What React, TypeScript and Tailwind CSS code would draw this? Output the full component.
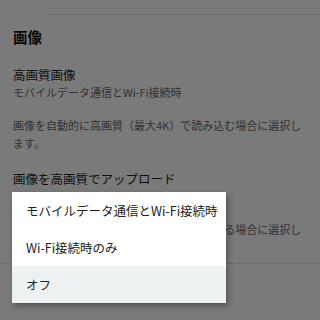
const font = { fontFamily: '"Noto Sans CJK JP", "Noto Sans", sans-serif' }

const options = ['モバイルデータ通信とWi-Fi接続時', 'Wi-Fi接続時のみ', 'オフ']

export default function App() {
  return (
    <div
      className="relative h-[320px] w-[320px] overflow-hidden bg-white text-[#1d1d1d]"
      style={font}
    >
      <div className="ml-[47px] h-[15px] border-b border-[#e4e4e4]" />

      <div className="px-[13px]">
        <h2 className="mt-[11px] text-[14.5px] font-bold leading-[22px] text-[#111]">画像</h2>

        <div className="mt-[18px] text-[12.5px] leading-[18px]">高画質画像</div>
        <div className="text-[11px] leading-[16px] text-[#6a6a6a]">
          モバイルデータ通信とWi-Fi接続時
        </div>
        <p className="mt-[16px] text-[11px] leading-[18px] text-[#6a6a6a]">
          画像を自動的に高画質（最大4K）で読み込む場合に選択します。
        </p>

        <div className="mt-[18px] text-[12.5px] leading-[18px]">画像を高画質でアップロード</div>
        <div className="mt-[2px] text-[11px] leading-[16px] text-[#6a6a6a]">
          モバイルデータ通信とWi-Fi接続時
        </div>
        <p className="mt-[14px] text-[11px] leading-[18px] text-[#6a6a6a]">
          画像を高画質（最大4K）でアップロードする場合に選択します。
        </p>
      </div>

      <div className="mt-[7px] border-b border-[#e4e4e4]" />

      <div className="px-[13px]">
        <h2 className="mt-[14px] text-[14.5px] font-bold leading-[22px] text-[#111]">動画</h2>
        <div className="mt-[18px] text-[12.5px] leading-[18px]">高画質動画</div>
      </div>

      {/* dim overlay */}
      <div className="absolute inset-0 bg-black/[0.52]" />

      {/* dropdown menu */}
      <div className="absolute left-[12px] top-[192px] w-[214px] bg-white shadow-[2px_3px_6px_rgba(0,0,0,0.3)]">
        {options.map((label, i) => (
          <div
            key={label}
            className={
              i === 2
                ? 'flex h-[37px] items-center whitespace-nowrap bg-[#eef1f2] pl-[14px] pt-[1px] text-[12.5px] text-[#222]'
                : 'flex h-[37px] items-center whitespace-nowrap pl-[14px] pt-[1px] text-[12.5px] text-[#222]'
            }
          >
            {label}
          </div>
        ))}
      </div>
    </div>
  )
}
